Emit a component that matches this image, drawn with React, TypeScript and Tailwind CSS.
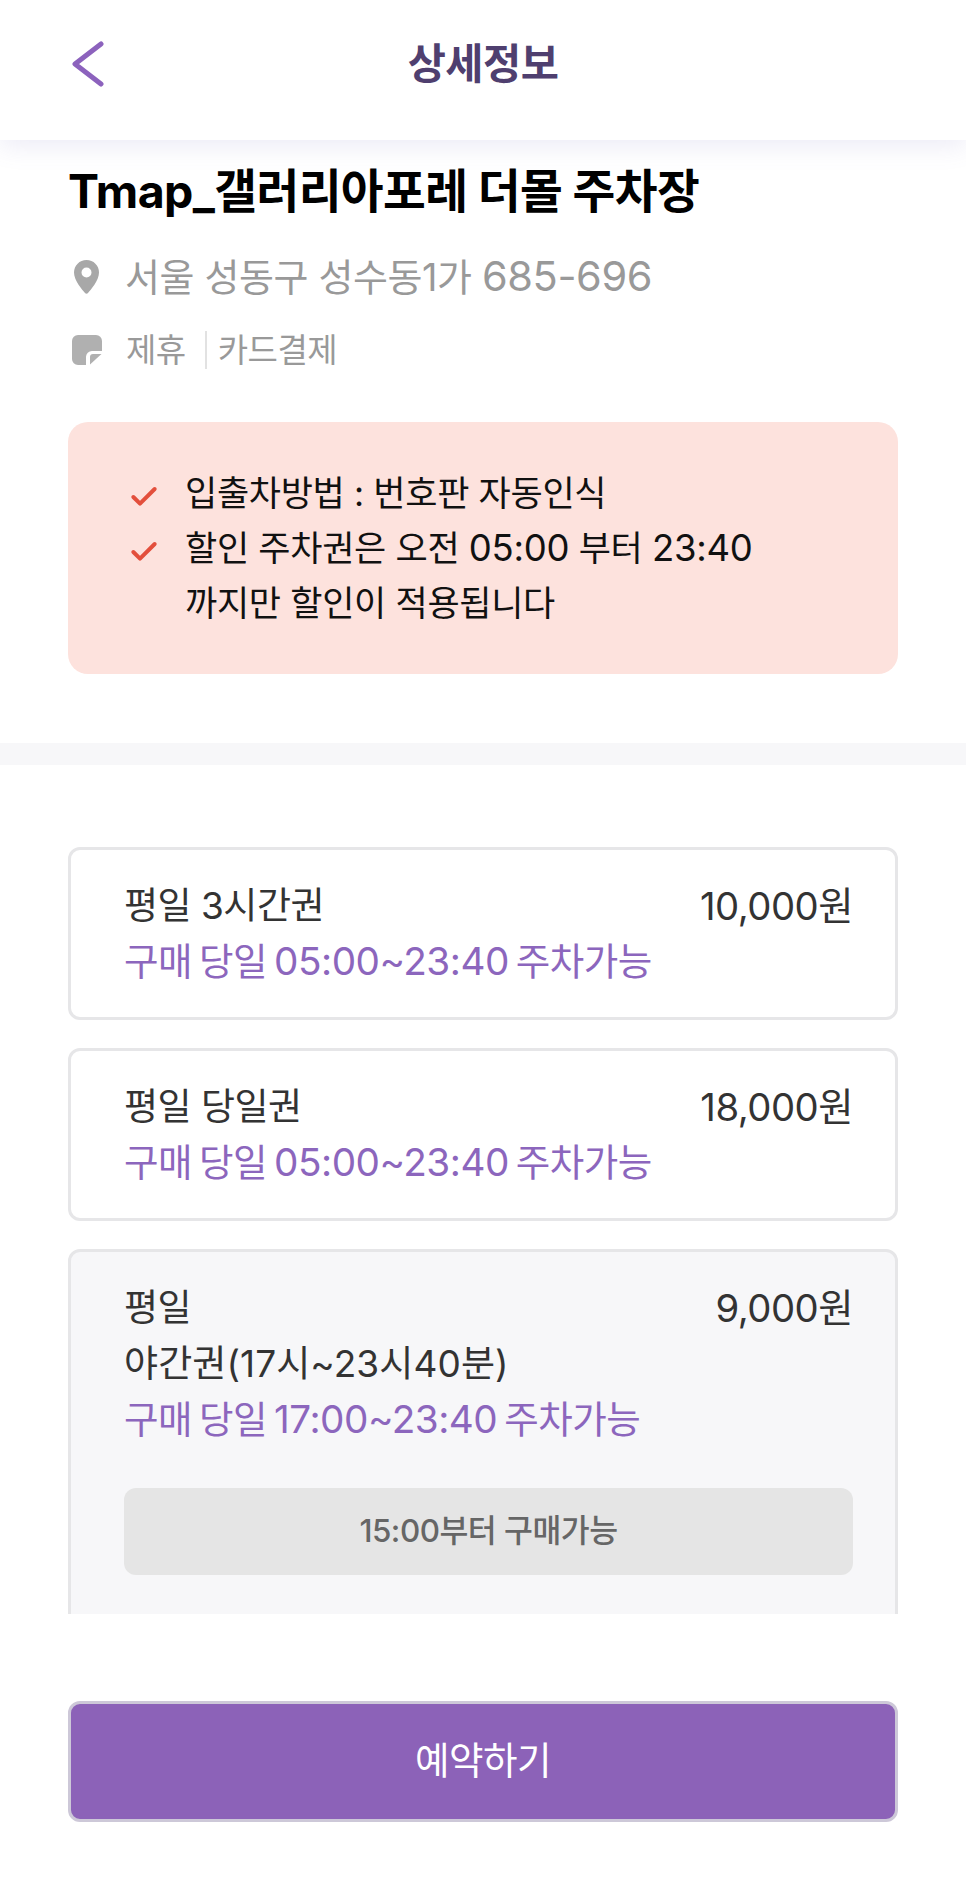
import type { ReactNode } from 'react';
import { Check } from 'lucide-react';

const FONT = 'font-["Inter","Noto_Sans_CJK_KR",sans-serif]';

function BackIcon() {
  return (
    <svg width="34" height="50" viewBox="0 0 34 50" fill="none" stroke="#8c62bd" strokeWidth="5" strokeLinecap="round" strokeLinejoin="round">
      <path d="M31 5 5 25l26 20" />
    </svg>
  );
}

function PinIcon() {
  return (
    <svg width="27" height="34" viewBox="0 0 26 34" className="shrink-0">
      <path
        fillRule="evenodd"
        fill="#a8a8a8"
        d="M13 0C6 0 .5 5.500.5 12.500c0 8 8.500 17.500 11 20.500.8.900 2.200.900 3 0 2.500-3 11-12.500 11-20.500C25.500 5.500 20 0 13 0Zm0 7.500a5 5 0 1 1 0 10 5 5 0 0 1 0-10Z"
      />
    </svg>
  );
}

function NoteIcon() {
  return (
    <svg width="30" height="30" viewBox="0 0 30 30" className="shrink-0">
      <path
        fill="#b0b0b0"
        d="M6 0h18a6 6 0 0 1 6 6v10H20a6 6 0 0 0-6 6v8H6a6 6 0 0 1-6-6V6a6 6 0 0 1 6-6Z"
      />
      <path fill="#b0b0b0" d="M18 29.500V22a3 3 0 0 1 3-3h8.500Z" />
    </svg>
  );
}

// digits run a little wider than the hangul around them
function Num({ children, className }: { children: ReactNode; className: string }) {
  return <span className={`leading-[0] ${className}`}>{children}</span>;
}

type Ticket = {
  name: string[];
  price: string;
  range: string;
  notice?: string;
};

const TICKETS: Ticket[] = [
  { name: ['평일 3시간권'], price: '10,000원', range: '05:00~23:40' },
  { name: ['평일 당일권'], price: '18,000원', range: '05:00~23:40' },
  {
    name: ['평일', '야간권(17시~23시40분)'],
    price: '9,000원',
    range: '17:00~23:40',
    notice: '15:00부터 구매가능',
  },
];

function TicketCard({ ticket }: { ticket: Ticket }) {
  return (
    <div
      className={`shrink-0 rounded-[12px] border-[3px] border-[#e6e6e8] pl-[53px] pr-[42px] pt-[28px] ${
        ticket.notice ? 'bg-[#f7f7f9] pb-[80px]' : 'bg-white pb-[27px]'
      }`}
    >
      <div className="flex items-start justify-between">
        <div className="text-[37px] leading-[56px] text-[#333333]">
          {ticket.name.map((line) => (
            <div key={line} className={line.includes('~') ? 'tracking-[0.1px]' : 'tracking-[-0.5px]'}>
              {line}
            </div>
          ))}
        </div>
        <div className="text-[38.300px] leading-[56px] tracking-[-0.5px] text-[#333333]">{ticket.price}</div>
      </div>
      <div className="text-[37.500px] leading-[56px] tracking-[-0.5px] text-[#8c66bd] [word-spacing:-3px]">
        구매 당일 <Num className="text-[38.700px]">{ticket.range}</Num> 주차가능
      </div>
      {ticket.notice && (
        <div className="mt-[40px] flex h-[87px] items-center justify-center rounded-[12px] bg-[#e5e5e5] text-[31.400px] font-medium tracking-[-0.5px] text-[#666666]">
          {ticket.notice}
        </div>
      )}
    </div>
  );
}

export default function App() {
  return (
    <div className={`flex h-[1890px] w-[966px] flex-col overflow-hidden bg-white ${FONT}`}>
      <header className="relative z-10 grid h-[140px] shrink-0 grid-cols-[1fr_auto_1fr] items-center bg-white pb-[12px] shadow-[0_6px_24px_rgba(120,110,190,0.14)]">
        <div className="pl-[70px]">
          <BackIcon />
        </div>
        <h1 className="text-[41.500px] font-bold tracking-[-0.5px] text-[#4f3f6f]">상세정보</h1>
      </header>

      <main className="flex min-h-0 flex-1 flex-col overflow-hidden">
        <section className="px-[68px] pt-[18px]">
          <h2 className="text-[46.500px] font-bold leading-[66px] tracking-[-0.6px] text-black">
            Tmap_갤러리아포레 더몰 주차장
          </h2>
          <div className="mt-[25px] flex items-center gap-[25px] pl-[5px]">
            <PinIcon />
            <span className="text-[38px] leading-[56px] tracking-[-0.4px] text-[#999999]">
              서울 성동구 성수동1가 <Num className="text-[41.500px]">685-696</Num>
            </span>
          </div>
          <div className="mt-[21px] flex items-center pl-[4px]">
            <NoteIcon />
            <span className="ml-[24px] text-[33px] leading-[48px] tracking-[-0.5px] text-[#999999]">제휴</span>
            <span className="ml-[19px] mr-[11px] h-[38px] w-[2px] bg-[#e2e2e2]" />
            <span className="text-[33px] leading-[48px] tracking-[-0.5px] text-[#999999]">카드결제</span>
          </div>

          <div className="mt-[48px] flex h-[252px] items-center rounded-[20px] bg-[#fde2dd] pl-[60px]">
            <div className="text-[35px] leading-[55px] tracking-[-0.3px] text-[#111111]">
              <div className="flex items-center gap-[25px]">
                <Check size={32} strokeWidth={3} color="#e34f3c" className="mt-[8px] shrink-0" />
                <span>입출차방법 : 번호판 자동인식</span>
              </div>
              <div className="flex items-center gap-[25px]">
                <Check size={32} strokeWidth={3} color="#e34f3c" className="mt-[8px] shrink-0" />
                <span>
                  할인 주차권은 오전 <Num className="text-[36.500px]">05:00</Num> 부터{' '}
                  <Num className="text-[36.500px]">23:40</Num>
                </span>
              </div>
              <div className="pl-[57px]">까지만 할인이 적용됩니다</div>
            </div>
          </div>
        </section>

        <div className="mt-[69px] h-[22px] shrink-0 bg-[#f7f7f9]" />

        <section className="flex flex-col gap-[28px] px-[68px] pt-[82px]">
          {TICKETS.map((ticket) => (
            <TicketCard key={ticket.price} ticket={ticket} />
          ))}
        </section>
      </main>

      <footer className="flex h-[276px] shrink-0 flex-col bg-white px-[68px] pt-[87px]">
        <button className="h-[121px] rounded-[12px] border-[3px] border-[#cdc8d8] bg-[#8c62b8] text-[37.500px] tracking-[-0.5px] text-white">
          예약하기
        </button>
      </footer>
    </div>
  );
}
